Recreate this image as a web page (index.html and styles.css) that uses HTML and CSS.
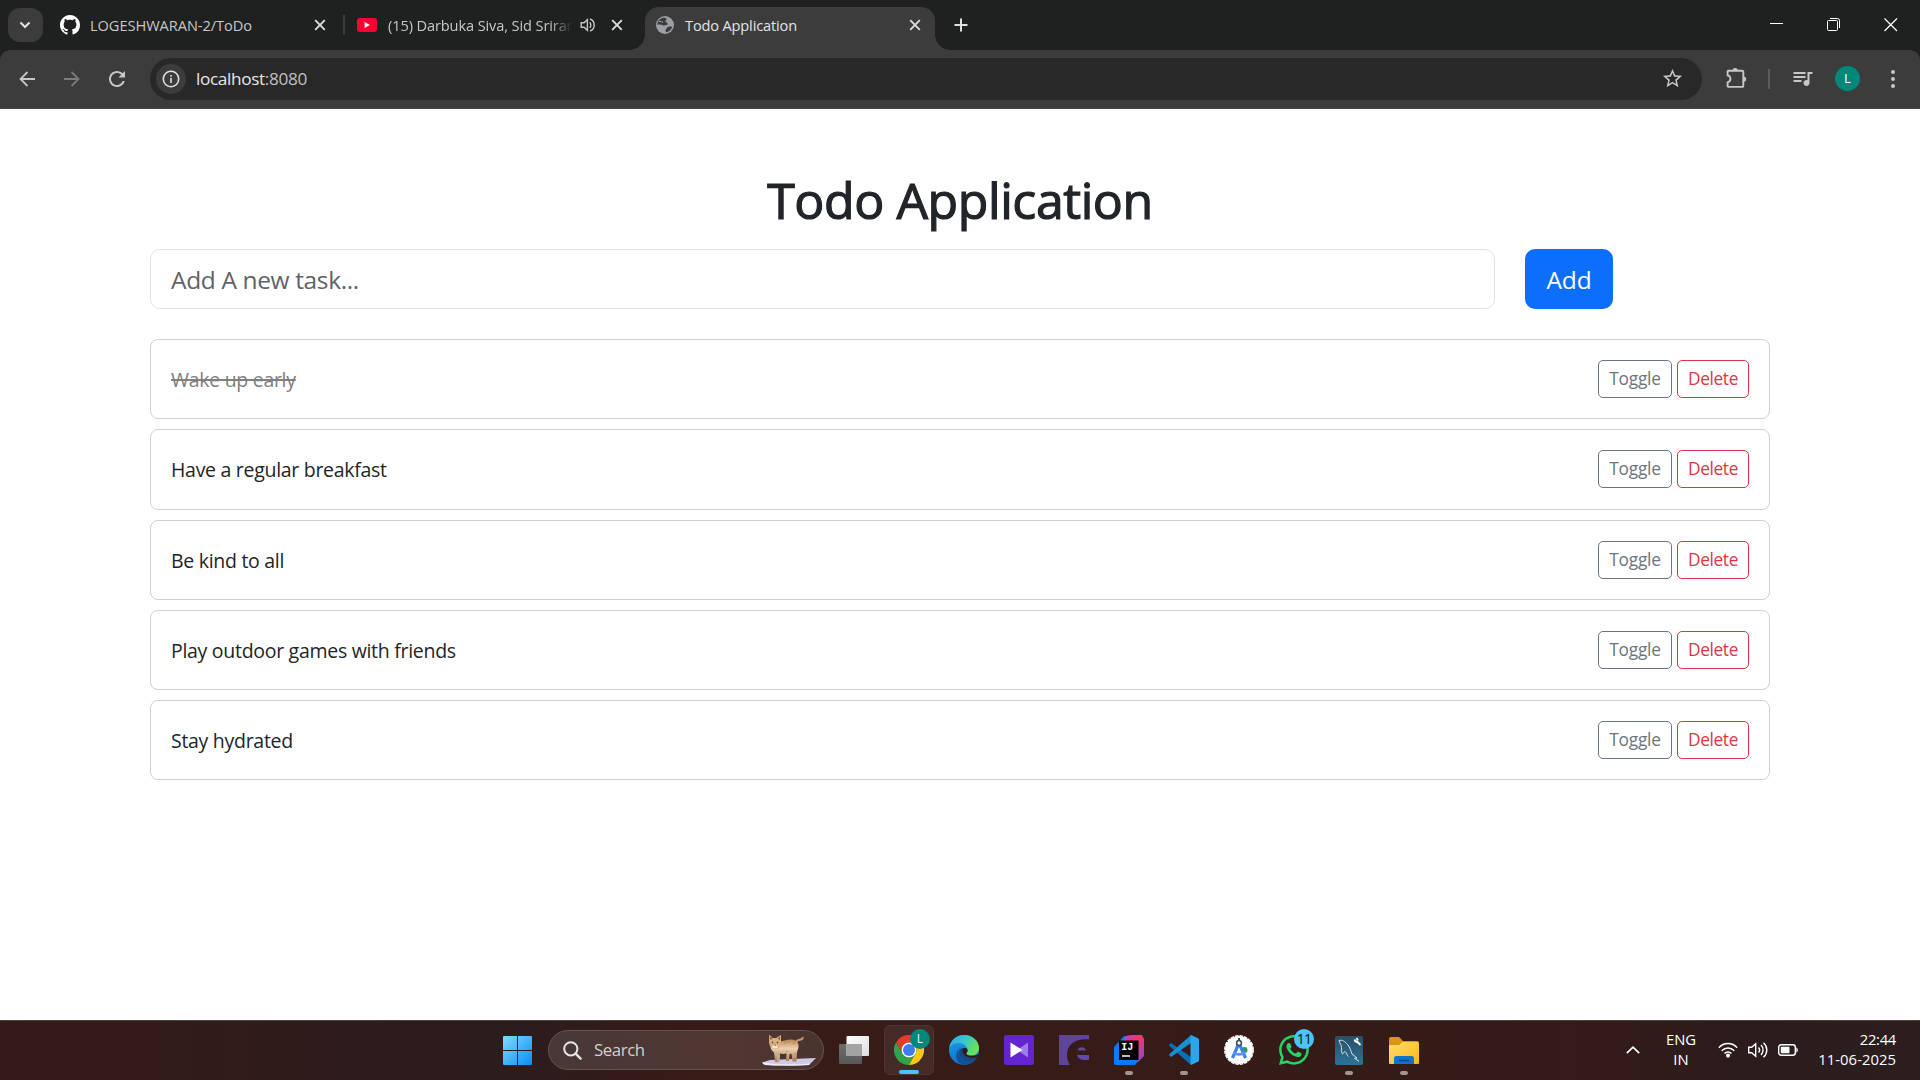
FILE: index.html
```html
<!DOCTYPE html>
<html lang="en">
<head>
<meta charset="utf-8">
<title>Todo Application</title>
<link rel="stylesheet" href="styles.css">
</head>
<body>
<svg width="0" height="0" class="defs" aria-hidden="true">
  <defs>
    <linearGradient id="win" x1="0" y1="0" x2="1" y2="1"><stop offset="0" stop-color="#7fdcff"/><stop offset="1" stop-color="#0a8cf5"/></linearGradient>
    <linearGradient id="tvBack" x1="0" y1="0" x2="0" y2="1"><stop offset="0" stop-color="#6f6f6f"/><stop offset="1" stop-color="#575757"/></linearGradient>
    <linearGradient id="tvFront" x1="0" y1="0" x2="1" y2="1"><stop offset="0" stop-color="#ffffff"/><stop offset="1" stop-color="#dddddd"/></linearGradient>
    <linearGradient id="edgeTop" x1="0" y1="0" x2="1" y2=".5"><stop offset="0" stop-color="#2ba6e0"/><stop offset=".5" stop-color="#35c5d0"/><stop offset="1" stop-color="#6be354"/></linearGradient>
    <linearGradient id="edgeLeft" x1="0" y1="0" x2=".4" y2="1"><stop offset="0" stop-color="#1fa1e6"/><stop offset="1" stop-color="#0c6fcf"/></linearGradient>
    <linearGradient id="ijHot" x1="0" y1="0" x2="1" y2="1"><stop offset="0" stop-color="#8a4fe8"/><stop offset=".4" stop-color="#ff3068"/><stop offset="1" stop-color="#7a50d0"/></linearGradient>
    <linearGradient id="mysql" x1="0" y1="0" x2="0" y2="1"><stop offset="0" stop-color="#2a4f66"/><stop offset="1" stop-color="#2d7298"/></linearGradient>
    <linearGradient id="folder" x1="0" y1="0" x2="1" y2="1"><stop offset="0" stop-color="#ffdc6b"/><stop offset="1" stop-color="#fbb917"/></linearGradient>
    <linearGradient id="cat" x1="0" y1="0" x2="0" y2="1"><stop offset="0" stop-color="#b98658"/><stop offset=".4" stop-color="#ecd0ae"/><stop offset="1" stop-color="#a87850"/></linearGradient>
  </defs>
</svg>

<header class="browser">
  <div class="tabstrip">
    <button class="tab-search"><svg width="14" height="14" viewBox="0 0 14 14"><path d="M2.500 4.500 7 9l4.500-4.500" fill="none" stroke="#e3e3e3" stroke-width="2"/></svg></button>
    <div class="tab tab-github">
      <svg width="20" height="20" viewBox="0 0 16 16" fill="#fff"><path d="M8 0C3.58 0 0 3.58 0 8c0 3.54 2.29 6.53 5.47 7.59.4.07.55-.17.55-.38 0-.19-.01-.82-.01-1.49-2.01.37-2.53-.49-2.69-.94-.09-.23-.48-.94-.82-1.13-.28-.15-.68-.52-.01-.53.63-.01 1.08.58 1.23.82.72 1.21 1.87.87 2.33.66.07-.52.28-.87.51-1.07-1.78-.2-3.64-.89-3.64-3.95 0-.87.31-1.59.82-2.15-.08-.2-.36-1.02.08-2.12 0 0 .67-.21 2.2.82.64-.18 1.32-.27 2-.27s1.36.09 2 .27c1.53-1.04 2.2-.82 2.2-.82.44 1.1.16 1.92.08 2.12.51.56.82 1.27.82 2.15 0 3.07-1.87 3.75-3.65 3.95.29.25.54.73.54 1.48 0 1.07-.01 1.93-.01 2.2 0 .21.15.46.55.38A8.01 8.01 0 0 0 16 8c0-4.42-3.58-8-8-8z"/></svg>
      <span class="tab-title">LOGESHWARAN-2/ToDo</span>
      <svg class="x" width="12" height="12" viewBox="0 0 12 12"><path d="M1.200 1.200l9.600 9.600M10.800 1.200l-9.600 9.600"/></svg>
    </div>
    <i class="tab-sep"></i>
    <div class="tab tab-youtube">
      <svg width="20" height="14" viewBox="0 0 20 14"><rect width="20" height="14" rx="3" fill="#ff0033"/><path d="M7.600 4v6l5.200-3z" fill="#fff"/></svg>
      <span class="tab-title faded">(15) Darbuka Siva, Sid Sriram</span>
      <svg class="audio" width="16" height="16" viewBox="0 0 16 16" fill="none" stroke="#c7c7c7" stroke-width="1.400"><path d="M1.200 5.700v4.600h2.900l3.300 3V2.700l-3.300 3z"/><path d="M9.700 5.200c1.500 1.300 1.500 4.300 0 5.600M10 2c5.600 1.700 5.600 10.300 0 12"/></svg>
      <svg class="x" width="12" height="12" viewBox="0 0 12 12"><path d="M1.200 1.200l9.600 9.600M10.800 1.200l-9.600 9.600"/></svg>
    </div>
    <div class="tab tab-active">
      <svg width="18" height="18" viewBox="0 0 18 18"><circle cx="9" cy="9" r="9" fill="#9aa0a6"/><path d="M7 1.700C8.500 1.500 10.400 2 10.600 3.100c.1 1-1.200 1.300-1.300 2.200 0 1 1.500 1 2.200 1.900.5.9-.1 1.800-1.300 1.900-1.200.1-1.600.9-2.900.3C5.500 8.600 3.200 8.200 1.500 9 1.300 5.400 3.700 2.500 7 1.700zM11.500 11.200c1-.9 3-.9 4.700-.4-.7 2.800-2.800 5-5.700 5.500-.9-.7-1.300-1.700-.8-2.500.6-.8 1-1.900 1.800-2.600z" fill="#3c3c3c"/><path d="M3 5.500c1.500-.5 2.600.6 4 .7" stroke="#9aa0a6" fill="none"/></svg>
      <span class="tab-title">Todo Application</span>
      <svg class="x" width="12" height="12" viewBox="0 0 12 12"><path d="M1.200 1.200l9.600 9.600M10.800 1.200l-9.600 9.600"/></svg>
    </div>
    <svg class="new-tab" width="14" height="14" viewBox="0 0 14 14"><path d="M7 .5v13M.5 7h13" stroke="#e0e0e0" stroke-width="2"/></svg>
    <div class="window-controls">
      <svg width="14" height="14" viewBox="0 0 14 14"><path d="M0 5.500h13" stroke="#fff"/></svg>
      <svg width="14" height="14" viewBox="0 0 14 14" fill="none" stroke="#fff"><rect x=".5" y="2.500" width="10" height="10" rx="1"/><path d="M3 .5h7.500a2 2 0 0 1 2 2V10"/></svg>
      <svg width="14" height="14" viewBox="0 0 14 14"><path d="M.5.5l12.500 12.500M13 .5L.5 13" stroke="#fff" stroke-width="1.200"/></svg>
    </div>
  </div>

  <div class="toolbar">
    <div class="nav">
      <svg width="16" height="16" viewBox="0 0 16 16"><path d="M16 8H2M8.500 1 1.500 8l7 7" fill="none" stroke="#c7c7c7" stroke-width="1.800"/></svg>
      <svg width="16" height="16" viewBox="0 0 16 16"><path d="M0 8h14M7.500 1l7 7-7 7" fill="none" stroke="#7c7c7c" stroke-width="1.800"/></svg>
      <svg width="16" height="16" viewBox="4 4 16 16"><path fill="#c7c7c7" d="M17.650 6.350C16.200 4.900 14.210 4 12 4c-4.420 0-7.990 3.580-7.990 8s3.570 8 7.990 8c3.730 0 6.840-2.550 7.730-6h-2.080c-.82 2.330-3.040 4-5.650 4-3.310 0-6-2.690-6-6s2.690-6 6-6c1.660 0 3.140.69 4.220 1.780L13.500 10.500H20V4l-2.350 2.350z"/></svg>
    </div>
    <div class="omnibox">
      <span class="site-info"><svg width="18" height="18" viewBox="0 0 18 18"><circle cx="9" cy="9" r="7.700" fill="none" stroke="#e0e0e0" stroke-width="1.600"/><path d="M9 8v5M9 5v1.800" stroke="#e0e0e0" stroke-width="1.600"/></svg></span>
      <span class="url">localhost<span class="port">:8080</span></span>
      <svg class="star" width="23" height="23" viewBox="0 0 24 24" fill="#c7c7c7"><path d="M22 9.240l-7.190-.62L12 2 9.190 8.630 2 9.240l5.460 4.730L5.820 21 12 17.270 18.180 21l-1.630-7.030L22 9.240zM12 15.400l-3.760 2.270 1-4.280-3.320-2.880 4.380-.38L12 6.100l1.710 4.040 4.380.38-3.320 2.880 1 4.280L12 15.400z"/></svg>
    </div>
    <div class="actions">
      <svg width="21" height="21" viewBox="0 0 21 21"><path d="M2 2.700h14.300c.6 0 1 .4 1 1v14.200c0 .6-.4 1-1 1H2.800c-.8 0-1.200-.4-1.200-1v-3.600c3.800-.9 3.800-6.100 0-6.900V3.400c0-.4.2-.7.4-.7z" fill="none" stroke="#c7c7c7" stroke-width="1.900"/><path d="M6.600 2.500c.2-3.200 5-3.200 5.200 0zM17.800 8.500c3.200.3 3.200 5 0 5.200z" fill="#c7c7c7"/></svg>
      <i class="bar"></i>
      <svg width="20" height="16" viewBox="2.500 5 20 16" fill="#c7c7c7"><path d="M15 6H3v2h12V6zm0 4H3v2h12v-2zM3 16h8v-2H3v2zM17 6v8.180c-.31-.11-.65-.18-1-.18-1.660 0-3 1.340-3 3s1.340 3 3 3 3-1.340 3-3V8h3V6h-5z"/></svg>
      <span class="avatar">L</span>
      <svg width="4" height="18" viewBox="0 0 4 18" fill="#c7c7c7"><circle cx="2" cy="2" r="2"/><circle cx="2" cy="9" r="2"/><circle cx="2" cy="16" r="2"/></svg>
    </div>
  </div>
</header>

<main class="page">
  <h1>Todo Application</h1>
  <form class="add-form">
    <input class="task-input" type="text" placeholder="Add A new task...">
    <button class="btn-add" type="button">Add</button>
  </form>
  <ul class="tasks">
    <li class="task"><span class="name done">Wake up early</span><button class="btn toggle">Toggle</button><button class="btn delete">Delete</button></li>
    <li class="task"><span class="name">Have a regular breakfast</span><button class="btn toggle">Toggle</button><button class="btn delete">Delete</button></li>
    <li class="task"><span class="name">Be kind to all</span><button class="btn toggle">Toggle</button><button class="btn delete">Delete</button></li>
    <li class="task"><span class="name">Play outdoor games with friends</span><button class="btn toggle">Toggle</button><button class="btn delete">Delete</button></li>
    <li class="task"><span class="name">Stay hydrated</span><button class="btn toggle">Toggle</button><button class="btn delete">Delete</button></li>
  </ul>
</main>

<footer class="taskbar">
  <div class="apps">
    <div class="app"><svg width="29" height="29" viewBox="0 0 29 29" fill="url(#win)"><path d="M1 0h13v14H0V1a1 1 0 0 1 1-1zM15 0h13a1 1 0 0 1 1 1v13H15zM0 15h14v14H1a1 1 0 0 1-1-1zM15 15h14v13a1 1 0 0 1-1 1H15z"/></svg></div>
    <div class="search">
      <svg width="19" height="19" viewBox="0 0 19 19" fill="none" stroke="#e8e4e3" stroke-width="2"><circle cx="7.800" cy="7.800" r="6.600"/><path d="M12.600 12.600l5 5" stroke-width="2.400" stroke-linecap="round"/></svg>
      <span class="search-label">Search</span>
      <svg class="lynx" width="56" height="34" viewBox="0 0 56 34">
        <path d="M1 29.500 9 27l46-2-7 7c-15 1-33 1-44-.5z" fill="#cfc9e2"/><path d="M1 29.500c1 1.500 2 2 3 2.500 12 1 30 .5 44 0l1-1.500C33 32 15 31.500 1 29.500z" fill="#f0eefb"/>
        <path d="M35 9c1.500-3 3.500-1.500 6-3 .8-.8.500-1.400 1.500-1" stroke="#c39468" stroke-width="2.400" fill="none"/>
        <path d="M16 9c5 0 8-2.500 13-2.500 4.500 0 8 1.500 8.500 5.500.4 3-1 5-1.500 7l-.5 9.500h-4l-1-8-2 1-.5 6.500h-3l.5-7.500c-2 .5-5 .6-7-.2l-.5 8.700h-3.800l-1.200-9.500c-3-2-4-5-3.500-9z" fill="url(#cat)"/>
        <path d="M8 7 8.300 1.500 11.500 5h3.500L20 2l0 5.500c.5 2.500.2 5-1.800 7-2.500 2.500-6 2-8.200-.2C8.200 12.500 8 10 8 7z" fill="#d8ad80"/>
        <path d="M9 3.500l.4 3.500 2-1.600zM19 3.500l-.1 3.500-2.200-1.600z" fill="#8a5238"/>
        <path d="M11 14c1.500-3 4-3 6 0-.5 2-5 2-6 0z" fill="#f6e6d2"/><circle cx="11.500" cy="9.500" r=".8" fill="#553722"/><circle cx="16.500" cy="9.500" r=".8" fill="#553722"/><path d="M13.100 11.800h2l-1 1.200z" fill="#4a2c20"/>
        <path d="M15.500 20h3.500l-.3 8.500h-2.500z" fill="#b7b09a"/>
        <g fill="#966642"><circle cx="24" cy="10" r=".6"/><circle cx="28" cy="9" r=".6"/><circle cx="33" cy="10" r=".6"/><circle cx="26" cy="18" r=".6"/><circle cx="34" cy="21" r=".7"/><circle cx="34" cy="25" r=".6"/></g>
      </svg>
    </div>
    <div class="app"><svg width="30" height="28" viewBox="0 0 30 28"><rect x="0" y="8" width="23" height="20" rx="1" fill="url(#tvBack)"/><rect x="7.500" y="0" width="22.500" height="20" rx="1" fill="url(#tvFront)"/><path d="M7.500 8H23v12H8.500a1 1 0 0 1-1-1z" fill="#a5a3a2"/></svg></div>
    <div class="app current"><svg width="30" height="30" viewBox="0 0 48 48"><path fill="#e8392d" d="M3.200 12A24 24 0 0 1 44.800 12H24A12 12 0 0 0 13.600 30z"/><path fill="#2fa24c" d="M3.200 12 13.600 30A12 12 0 0 0 34.400 30L24 48A24 24 0 0 1 3.200 12z"/><path fill="#fdc714" d="M44.800 12A24 24 0 0 1 24 48L34.400 30A12 12 0 0 0 24 12z"/><circle cx="24" cy="24" r="12" fill="#fff"/><circle cx="24" cy="24" r="9.600" fill="#3b7ded"/></svg><b class="badge profile">L</b></div>
    <div class="app"><svg width="30" height="30" viewBox="0 0 30 30"><circle cx="15" cy="15" r="15" fill="url(#edgeLeft)"/><path d="M.3 12.500C1.500 5 7.500 0 15 0c9 0 15 6 15 13 0 4.500-3 7.500-7.500 7.500-3 0-5-1-5-2.300 0-.8 1-1.200 1-3.200C18.500 11.500 14.500 8 9.500 8 5.500 8 2 9.800.3 12.500z" fill="url(#edgeTop)"/><path d="M12 12c-2.700 2-3.500 6-1.500 9.500 2.600 5 9 7 16 2C24 27.500 20 30 15.500 30 9 29 6.500 24 7.500 19c.5-3 2-5.500 4.500-7z" fill="#12508f"/><path d="M18 15.200c-2-3-6.500-3-8 1-1 5 3.500 10.300 9.500 10.300 3.500 0 6-1.200 8-3.500 1-1.700.4-2.600-.8-2-5 2.200-10 .2-9.300-2.800.1-.8 1-1 .6-3z" fill="#164a86"/><circle cx="16" cy="15.500" r="2.600" fill="#321b17"/><path d="M17 17.200c-.8 3 4 5 13 2.300l-2 3C21 23.500 13 22 14 15z" fill="#321b17"/></svg></div>
    <div class="app"><svg width="30" height="30" viewBox="0 0 30 30"><rect width="30" height="30" rx="2" fill="#6424cf"/><path d="M24 7.500v15L13 15z" fill="#a17be6"/><path d="M6.500 7.500v15L18.500 15z" fill="#fff"/></svg></div>
    <div class="app"><svg width="30" height="30" viewBox="0 0 30 30"><path d="M0 0h30v4.500C18 3 8 9 8 19.500 8 24 9 27 11 30H0z" fill="#5e439f"/><path d="M18.500 15.500c1-4.500 7.500-4.500 8.500 0zM18 20h12v4.500c-6 1.500-11 0-12-4.500z" fill="#6248a8"/></svg></div>
    <div class="app open"><svg width="30" height="30" viewBox="0 0 30 30"><path d="M0 12 10 1h15L15 15l10 10-4 5H7l-7-7z" fill="#087cfa"/><path d="M12 1 17 0h11l2 4v17l-6 6-4-19-11-2z" fill="url(#ijHot)"/><path d="M0 20l24 4-3.500 6H2a2 2 0 0 1-2-2z" fill="#087cfa"/><rect x="5" y="5.500" width="19.500" height="19.500" fill="#000"/><text x="7.300" y="15" class="ij">IJ</text><path d="M8 21h8" stroke="#fff" stroke-width="1.500"/></svg></div>
    <div class="app open"><svg width="30" height="30" viewBox="0 0 30 30"><path d="M0 9.700 2 8l20 14v8L.5 11z" fill="#0b6fb8"/><path d="M0 20.300 2 22 22 8V0L.5 19z" fill="#178fd6"/><path d="M22 0l7 3.200c.6.300 1 .9 1 1.600v20.400c0 .7-.4 1.300-1 1.600L22 30l-.5-1V1z" fill="#29a8ee"/></svg></div>
    <div class="app"><svg width="30" height="30" viewBox="0 0 30 30"><circle cx="15" cy="15" r="14" fill="#fff"/><circle cx="15" cy="15" r="14.300" fill="none" stroke="#fff" stroke-width="1.300" stroke-dasharray="3.500 1"/><circle cx="20.500" cy="15" r="3" fill="#2e9d57"/><path d="M15 8 8.500 23M15 8l6.500 15" stroke="#3f7fee" stroke-width="3.200"/><path d="M9.500 17.500c3 2.500 8 2.500 11 0" stroke="#5b93f4" stroke-width="2.600" fill="none"/><circle cx="15" cy="8" r="2.400" fill="#fff" stroke="#3d4a58" stroke-width="1.500"/><path d="M15 3v3" stroke="#3d4a58" stroke-width="2"/></svg></div>
    <div class="app"><svg width="30" height="30" viewBox="0 0 16 16" fill="#25d366"><path d="M13.601 2.326A7.850 7.850 0 0 0 7.994 0C3.627 0 .068 3.558.064 7.926c0 1.399.366 2.760 1.057 3.965L0 16l4.204-1.102a7.900 7.900 0 0 0 3.790.965h.004c4.368 0 7.926-3.558 7.930-7.930A7.900 7.900 0 0 0 13.600 2.326zM7.994 14.521a6.600 6.600 0 0 1-3.356-.92l-.24-.144-2.494.654.666-2.433-.156-.251a6.560 6.560 0 0 1-1.007-3.505c0-3.626 2.957-6.584 6.591-6.584a6.560 6.560 0 0 1 4.660 1.931 6.560 6.560 0 0 1 1.928 4.660c-.004 3.639-2.961 6.592-6.592 6.592m3.615-4.934c-.197-.099-1.170-.578-1.353-.646-.182-.065-.315-.099-.445.099-.133.197-.513.646-.627.775-.114.133-.232.148-.43.05-.197-.1-.836-.308-1.592-.985-.59-.525-.985-1.175-1.103-1.372-.114-.198-.011-.304.088-.403.087-.088.197-.232.296-.346.1-.114.133-.198.198-.33.065-.134.034-.248-.015-.347-.05-.099-.445-1.076-.612-1.470-.16-.389-.323-.335-.445-.34-.114-.007-.247-.007-.38-.007a.73.73 0 0 0-.529.247c-.182.198-.691.677-.691 1.654s.71 1.916.81 2.049c.098.133 1.394 2.132 3.383 2.992.47.205.84.326 1.129.418.475.152.904.129 1.246.08.38-.058 1.171-.48 1.338-.943.164-.464.164-.86.114-.943-.049-.084-.182-.133-.38-.232"/></svg><b class="badge count">11</b></div>
    <div class="app open"><svg width="28" height="29" viewBox="0 0 28 29"><rect width="28" height="29" rx="2" fill="url(#mysql)"/><path d="M4 4.500c3-1 6 1 8.500 4C15 11.500 16 15 17 18l5 4-2.500.3 4.500 3M4 4.500c.5 3 2.500 4 2.500 7 0 2-.5 4 1 6.500 1.500-1 1.500-2.500 2.500-2.500 1.500 1 2 4.500 3.500 5" fill="none" stroke="#d5e2ea" stroke-width="1"/><path d="M19.500 3.500c.5 2 1.500 2.500 3 2.500l3 3M21.500 2l1.500 2.500" stroke="#fff" stroke-width="1.800" fill="none"/></svg></div>
    <div class="app open"><svg width="30" height="27" viewBox="0 0 30 27"><path d="M0 2a2 2 0 0 1 2-2h8l4 4h14a2 2 0 0 1 2 2v5H0z" fill="#dc9413"/><path d="M0 8h10l3.500-3H28a2 2 0 0 1 2 2v19a1 1 0 0 1-1 1H1a1 1 0 0 1-1-1z" fill="url(#folder)"/><path d="M5 27v-5.500a2.500 2.500 0 0 1 2.500-2.500h15a2.500 2.500 0 0 1 2.500 2.500V27z" fill="#0f75cc"/><path d="M10 23.500h10" stroke="#0a4b86" stroke-width="1.600"/></svg></div>
  </div>
  <div class="tray">
    <svg width="14" height="8" viewBox="0 0 14 8"><path d="M.8 7.200 7 1.200l6.200 6" fill="none" stroke="#fff" stroke-width="1.700"/></svg>
    <div class="lang">ENG<br>IN</div>
    <div class="status">
      <svg width="20" height="16" viewBox="0 0 20 16" fill="none" stroke="#fff" stroke-width="1.500"><path d="M.8 5.800c5-5.600 13.400-5.600 18.400 0M3.700 8.700c3.500-3.700 9.100-3.700 12.600 0M6.500 11.500c2-2 5-2 7 0"/><circle cx="10" cy="13.600" r="1.300" fill="#fff"/></svg>
      <svg width="20" height="18" viewBox="0 0 20 18" fill="none" stroke="#fff" stroke-width="1.400"><path d="M.7 6.300v5.400h3l4 3.600V2.700l-4 3.600z"/><path d="M10.500 6.500c1.300 1.400 1.300 3.600 0 5M13 4c2.700 2.700 2.700 7.300 0 10M15.500 1.700c4.400 4 4.400 10.600 0 14.600"/></svg>
      <svg width="20" height="12" viewBox="0 0 20 12"><rect x=".7" y=".7" width="16.600" height="10.600" rx="2.500" fill="none" stroke="#fff" stroke-width="1.400"/><rect x="2.800" y="2.700" width="8.700" height="6.600" rx=".8" fill="#fff"/><path d="M18.300 3.500c2 .5 2 4.500 0 5z" fill="#fff"/></svg>
    </div>
    <div class="clock">22:44<br><span class="date">11-06-2025</span></div>
  </div>
</footer>
</body>
</html>
```
FILE: styles.css
```css
* { box-sizing: border-box; }

body {
  margin: 0;
  width: 1920px;
  height: 1080px;
  overflow: hidden;
  display: flex;
  flex-direction: column;
  background: #fff;
  color: #212529;
  font-family: "Open Sans", "Noto Sans", sans-serif;
}

svg { display: block; flex: none; }
.defs { position: absolute; }
button { font-family: inherit; }

/* Browser frame */
.browser { height: 109px; flex: none; background: #1f2120; }
.tabstrip { height: 50px; display: flex; align-items: center; padding-left: 8px; }
.tab-search {
  width: 35px;
  height: 34px;
  padding: 0 1px 0 0;
  border: 0;
  border-radius: 12px;
  background: #3c3c3c;
  display: grid;
  place-items: center;
}
.tab { height: 50px; display: flex; align-items: center; }
.tab-github { width: 283px; padding-left: 17px; }
.tab-title {
  margin-left: 10px;
  font-size: 14.6px;
  letter-spacing: -.05px;
  line-height: 20px;
  color: #c7c7c7;
  white-space: nowrap;
}
.x { margin-left: auto; fill: none; stroke: #dcdcdc; stroke-width: 1.9; }
.tab-sep { width: 2px; height: 20px; margin: 0 12px 0 17px; background: #3c3c3c; }
.tab-youtube { width: 266px; }
.tab-youtube .tab-title { margin-left: 11px; letter-spacing: -.12px; }
.faded {
  width: 184px;
  overflow: hidden;
  -webkit-mask-image: linear-gradient(90deg, #000 88%, transparent);
  mask-image: linear-gradient(90deg, #000 88%, transparent);
}
.audio { margin-left: 8px; }
.tab-active {
  position: relative;
  width: 290px;
  height: 43px;
  margin-left: 22px;
  align-self: flex-end;
  padding: 0 14px 7px 11px;
  border-radius: 14px 14px 0 0;
  background: #3c3c3c;
}
.tab-active .tab-title { margin-left: 11px; color: #e3e3e3; letter-spacing: -.16px; }
.tab-active::before,
.tab-active::after {
  content: "";
  position: absolute;
  bottom: 0;
  width: 15px;
  height: 15px;
}
.tab-active::before { left: -15px; background: radial-gradient(circle at 0 0, transparent 14.5px, #3c3c3c 15px); }
.tab-active::after { right: -15px; background: radial-gradient(circle at 100% 0, transparent 14.5px, #3c3c3c 15px); }
.new-tab { margin-left: 19px; }
.window-controls { margin-left: auto; padding-right: 22px; display: flex; gap: 43px; }

.toolbar {
  height: 59px;
  display: flex;
  align-items: center;
  padding: 0 25px 1px 19px;
  background: #3c3c3c;
  border-bottom: 1px solid #484545;
  border-radius: 10px 10px 0 0;
}
.nav { display: flex; gap: 29px; width: 131px; }
.omnibox {
  width: 1552px;
  height: 42px;
  display: flex;
  align-items: center;
  padding: 0 18px 0 6px;
  border-radius: 21px;
  background: #282828;
}
.site-info { width: 30px; height: 30px; border-radius: 50%; background: #3c3c3c; display: grid; place-items: center; }
.url { margin: 1px 0 0 10px; font-size: 17.2px; letter-spacing: -.35px; line-height: 24px; color: #e6e6e6; }
.port { color: #c0c0c0; }
.star { margin-left: auto; }
.actions { flex: 1; display: flex; align-items: center; padding-left: 24px; }
.bar { width: 2px; height: 20px; margin: 0 23px 0 21px; background: #5c5c5c; }
.avatar {
  width: 25px;
  height: 25px;
  margin: 0 auto 0 22px;
  border-radius: 50%;
  background: #00897b;
  color: #fff;
  font-size: 13px;
  line-height: 25px;
  text-align: center;
}

/* Page */
.page { flex: 1; padding: 61px 150px 0; }
h1 {
  margin: 0 0 19px;
  font-size: 50px;
  font-weight: 500;
  line-height: 60px;
  letter-spacing: -.42px;
  text-align: center;
  -webkit-text-stroke: 1.2px #212529;
}
.add-form { display: flex; gap: 30px; margin: 0; }
.task-input {
  width: 1345px;
  height: 60px;
  padding: 0 20px;
  border: 1px solid #dee2e6;
  border-radius: 10px;
  background: #fff;
  font: 24.5px/37px "Open Sans", "Noto Sans", sans-serif;
  letter-spacing: -.36px;
}
.task-input::placeholder { color: #5f6368; opacity: 1; }
.btn-add {
  width: 88px;
  height: 60px;
  padding: 0;
  border: 0;
  border-radius: 10px;
  background: #0d6efd;
  color: #fff;
  font-size: 24.5px;
  letter-spacing: -.1px;
}
.tasks { margin: 30px 0 0; padding: 0; list-style: none; display: flex; flex-direction: column; gap: 10px; }
.task {
  height: 80.25px;
  display: flex;
  align-items: center;
  padding: 0 20px;
  border: 1px solid #d0d1d2;
  border-radius: 8px;
}
.name { margin-right: auto; padding-top: 2px; font-size: 19.5px; letter-spacing: -.29px; line-height: 30px; }
.done { color: #808080; text-decoration: line-through 2px; }
.btn {
  height: 38px;
  padding: 0 0 1px;
  border: 1px solid;
  border-radius: 5px;
  background: #fff;
  font-size: 17.3px;
  letter-spacing: -.2px;
}
.toggle { width: 74px; color: #6c757d; margin-right: 5px; }
.delete { width: 72px; color: #dc3545; letter-spacing: -.35px; }

/* Taskbar */
.taskbar {
  height: 60px;
  flex: none;
  display: flex;
  padding: 0 0 1px 492px;
  border-top: 1px solid #4b4243;
  background: linear-gradient(90deg, #351b19 0%, #2c1c1d 27%, #381b17 36%, #361c18 60%, #351b19 82%, #2b1c1d 92%, #2c1d1e 100%);
}
.apps { display: flex; align-items: center; gap: 5px; }
.app { position: relative; width: 50px; height: 50px; display: grid; place-items: center; border-radius: 6px; }
.search {
  width: 276px;
  height: 40px;
  margin-left: 1px;
  display: flex;
  align-items: center;
  padding: 0 6px 0 14px;
  border: 1px solid #655350;
  border-radius: 20px;
  background: linear-gradient(90deg, #473837, #503732 60%, #4a3430);
}
.search-label { margin-left: 12px; color: #d6cfcd; font-size: 16.8px; letter-spacing: -.4px; line-height: 24px; }
.lynx { margin-left: auto; }
.current { background: #452b28; border: 1px solid #50342f; }
.current::after,
.open::after {
  content: "";
  position: absolute;
  left: 50%;
  bottom: 0;
  width: 8px;
  height: 4px;
  border-radius: 2px;
  background: #a39491;
  transform: translateX(-50%);
}
.current::after { width: 20px; background: #4cc2ff; }
.badge { position: absolute; border-radius: 50%; text-align: center; font-weight: 400; }
.profile { left: 25px; top: 3px; width: 20px; height: 20px; background: #00897b; color: #e8f5f3; font-size: 12px; line-height: 20px; }
.count { left: 25px; top: 4px; width: 20px; height: 20px; background: #4cc2ff; color: #111; font-size: 14px; letter-spacing: -.8px; line-height: 20px; }
.ij { font: 700 10px "Liberation Mono", monospace; fill: #fff; }

.tray {
  margin-left: auto;
  display: flex;
  align-items: center;
  padding-right: 24px;
  color: #fff;
  font-size: 14.8px;
  line-height: 20px;
}
.lang { width: 30px; margin: -2px 0 0 26px; text-align: center; }
.status { display: flex; align-items: center; gap: 10px; margin-left: 22px; }
.clock { width: 80px; margin: -2px 0 0 18px; text-align: right; letter-spacing: -.3px; }
.date { letter-spacing: .05px; }
```
